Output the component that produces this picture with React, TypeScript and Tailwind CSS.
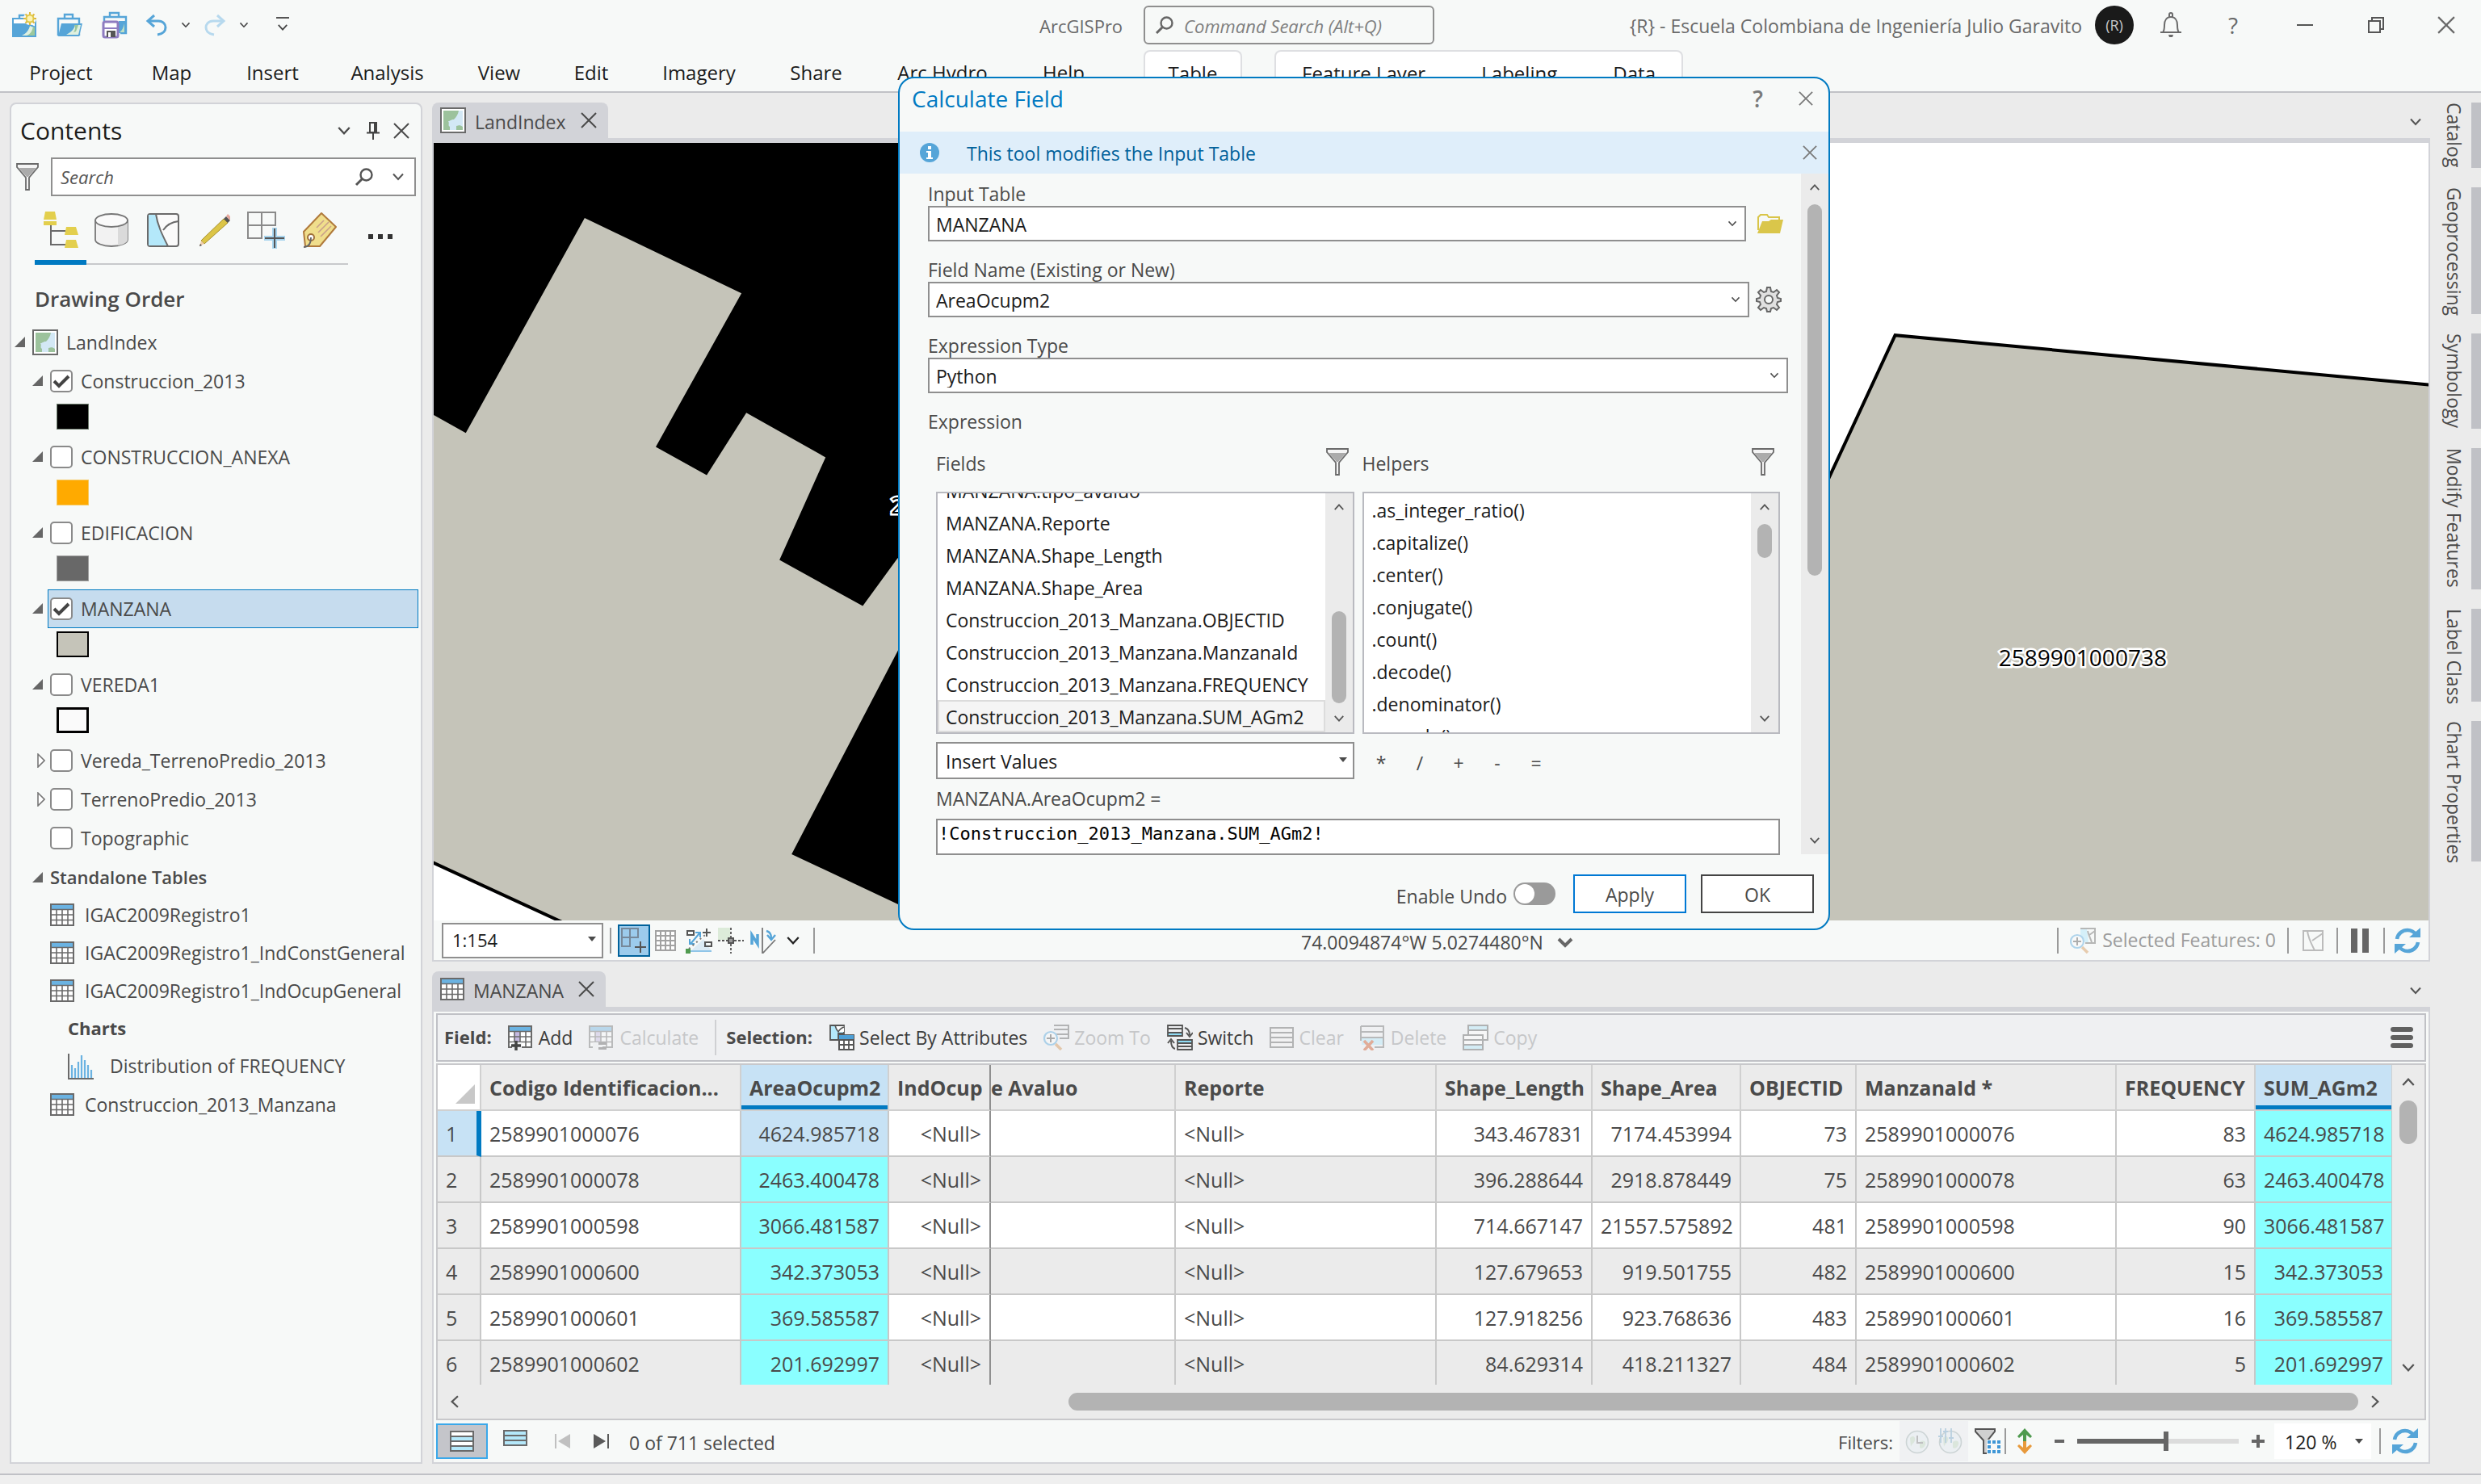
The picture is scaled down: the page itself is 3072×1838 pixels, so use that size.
import React from "react";

const FONT = "font-['Open_Sans','Noto_Sans',sans-serif]";

type P = { className?: string };

const Chevron = ({ className = "w-4 h-4", dir = "down" }: P & { dir?: "down" | "up" | "left" | "right" }) => {
  const d = {
    down: "M2 4.5 8 11l6-6.5",
    up: "M2 11.5 8 5l6 6.5",
    left: "M11.5 2 5 8l6.5 6",
    right: "M4.5 2 11 8l-6.5 6",
  }[dir];
  return (
    <svg viewBox="0 0 16 16" className={`shrink-0 ${className}`} fill="none" stroke="currentColor" strokeWidth="2">
      <path d={d} />
    </svg>
  );
};

const Caret = ({ className = "w-3 h-2" }: P) => (
  <svg viewBox="0 0 12 8" className={`shrink-0 ${className}`} fill="currentColor">
    <path d="M1 1h10L6 7z" />
  </svg>
);

const Cross = ({ className = "w-5 h-5" }: P) => (
  <svg viewBox="0 0 20 20" className={`shrink-0 ${className}`} fill="none" stroke="currentColor" strokeWidth="2">
    <path d="M1 1l18 18M19 1 1 19" />
  </svg>
);

const Magnifier = ({ className = "w-6 h-6" }: P) => (
  <svg viewBox="0 0 24 24" className={`shrink-0 ${className}`} fill="none" stroke="currentColor">
    <circle cx="14.5" cy="9.5" r="7" strokeWidth="2.4" />
    <path d="M9.5 14.5 2 22" strokeWidth="3" />
  </svg>
);

const NewProject = () => (
  <svg viewBox="0 0 32 32" className="size-8 shrink-0">
    <path d="M2 8h28v22H2z" fill="#fff" stroke="#56a5d8" strokeWidth="2" />
    <path d="M10 8V4h8" fill="none" stroke="#56a5d8" strokeWidth="2.4" />
    <path d="M2 14h20l8 4v12H2z" fill="#56a5d8" />
    <path d="M13 29C18 27 22 22 23 17l5 2v10z" fill="#dff0e0" />
    <path d="M19 29c5-2 7-6 8-11l2 1v10z" fill="#9cc89c" />
    <circle cx="23" cy="8" r="8" fill="#f7f9f8" />
    <path d="M23 0v16M15 8h16M17.5 2.500l11 11M28.500 2.500l-11 11" stroke="#e0b93a" strokeWidth="2" />
    <circle cx="23" cy="8" r="4.500" fill="#fdf3b5" stroke="#e0c84a" strokeWidth="2" />
  </svg>
);

const OpenProject = () => (
  <svg viewBox="0 0 32 32" className="size-8 shrink-0">
    <path d="M2 28V8h26v20zM10 8V3h10v5" fill="none" stroke="#56a5d8" strokeWidth="2.400" />
    <path d="M2 30l4-16h26l-4 16z" fill="#56a5d8" />
    <path d="M12 28c6-3 10-7 11-12h7l-3 12z" fill="#dff0e0" />
    <path d="M22 16c2 3 1 6-1 9l3-1 3-8z" fill="#9cc89c" />
  </svg>
);

const SaveProject = () => (
  <svg viewBox="0 0 32 34" className="h-[34px] w-8 shrink-0">
    <path d="M3 12V7h27v20h-7M10 7V2h11v5" fill="none" stroke="#56a5d8" strokeWidth="2.400" />
    <path d="M21 12h9v15h-9z" fill="#56a5d8" />
    <path d="M22 26c3-2 5-6 6-11v11z" fill="#bfe0c4" />
    <rect x="2" y="13" width="18" height="19" rx="2" fill="#fff" stroke="#8e7cc0" strokeWidth="3" />
    <path d="M3 21h16" stroke="#8e7cc0" strokeWidth="2" />
    <path d="M6 24h11v8H6z" fill="#555" />
    <path d="M8 26h3v6H8z" fill="#fff" />
  </svg>
);

const UndoArrow = ({ className = "" }: P) => (
  <svg viewBox="0 0 28 28" className={`size-7 shrink-0 ${className}`} fill="none" stroke="currentColor" strokeWidth="3">
    <path d="M11 2 3 9l8 7" />
    <path d="M3 9h13c6 0 9 4 9 8s-3 8-10 9" />
  </svg>
);

const Bell = () => (
  <svg viewBox="0 0 28 32" className="h-8 w-7 shrink-0" fill="none" stroke="#6a6a6a" strokeWidth="2">
    <path d="M1 25h26M4 25c2-2 2-5 2-9 0-6 3-10 8-10s8 4 8 10c0 4 0 7 2 9M12 6V3a2 2 0 0 1 4 0v3" />
    <path d="M11 28h6l-1 3h-4z" fill="#6a6a6a" stroke="none" />
  </svg>
);

const Restore = () => (
  <svg viewBox="0 0 20 20" className="size-5 shrink-0" fill="none" stroke="#555" strokeWidth="2">
    <path d="M1 5h14v14H1zM5 5V1h14v14h-4" />
  </svg>
);

const MapIcon = () => (
  <svg viewBox="0 0 32 32" className="size-8 shrink-0">
    <rect x="1" y="1" width="30" height="30" fill="#fff" stroke="#6a6a6a" strokeWidth="2" />
    <path d="M4 4h24v24H4z" fill="#d3e8f5" />
    <path d="M4 4h19c-1 5-3 8-6 11-4 0-4 2-7 2 2 3-1 5 2 7v4H4zM20 23c4-1 5-1 8 1v4h-8z" fill="#9cc29c" />
  </svg>
);

const TableIcon = ({ className = "" }: P) => (
  <svg viewBox="0 0 30 28" className={`h-7 w-[30px] shrink-0 ${className}`}>
    <rect x="1" y="1" width="28" height="26" fill="#fff" stroke="#6a6a6a" strokeWidth="2" />
    <path d="M2 2h26v5H2z" fill="#6bb3e2" />
    <path d="M1 7.500h28M1 14h28M1 20.500h28M8 8v19M15 8v19M22 8v19" stroke="#6a6a6a" strokeWidth="1.600" />
  </svg>
);

const Pin = () => (
  <svg viewBox="0 0 18 22" className="h-[22px] w-[18px] shrink-0" fill="none" stroke="#444" strokeWidth="2">
    <path d="M5 1h8v12H5zM1 13.500h16M9 14v8M11 1v12" />
  </svg>
);

const Funnel = () => (
  <svg viewBox="0 0 28 34" className="h-[34px] w-7 shrink-0">
    <path d="M1 1h26v4L16 18v15h-4V18L1 5z" fill="#f4f4f4" stroke="#6a6a6a" strokeWidth="1.800" />
    <path d="M3 6h22L15 17h-2z" fill="#ababab" />
  </svg>
);

const DrawOrderIcon = () => (
  <svg viewBox="0 0 44 46" className="h-[46px] w-11 shrink-0">
    <path d="M9 17v24h18M9 24h18" fill="none" stroke="#6a6a6a" strokeWidth="2" />
    <path d="M2 0h12l2 10H0zM0 12h16v5H0zM28 19h12l3 10H26zM28 35h12l3 10H26z" fill="#e3cf4d" />
  </svg>
);

const Cylinder = () => (
  <svg viewBox="0 0 42 42" className="size-[42px] shrink-0" stroke="#777" strokeWidth="1.800">
    <path d="M1 9v24c0 4 9 8 20 8s20-4 20-8V9z" fill="#f2f2f2" />
    <path d="M29 16c7-1 11-3 12-6v23c0 3-5 6-12 7z" fill="#dadada" stroke="none" />
    <ellipse cx="21" cy="9" rx="20" ry="8" fill="#fafafa" />
  </svg>
);

const PartIcon = () => (
  <svg viewBox="0 0 40 42" className="h-[42px] w-10 shrink-0" stroke="#6a6a6a" strokeWidth="2">
    <rect x="1" y="1" width="38" height="40" rx="3" fill="#fafafa" />
    <path d="M2 2h9c2 14 8 26 14 38H2z" fill="#b4e8fa" stroke="none" />
    <path d="M11 1c2 14 8 26 15 40M20 21C24 15 30 11 39 10" fill="none" />
  </svg>
);

const Pencil = () => (
  <svg viewBox="0 0 40 42" className="h-[42px] w-10 shrink-0">
    <path d="M31 7l5 5L7 38l-4-4z" fill="#dcc547" stroke="#a58f2a" strokeWidth="1" />
    <path d="M3 34l4 4-6 3z" fill="#f0cfae" />
    <path d="M1 41l1-3 2 2z" fill="#444" />
    <path d="M31 7l3-3 5 5-3 3z" fill="#555" />
    <path d="M34 4l2-3 3 3v5z" fill="#e6a79c" />
  </svg>
);

const GridPlus = () => (
  <svg viewBox="0 0 48 48" className="size-12 shrink-0" fill="none">
    <path d="M1 2h34v16H1zM1 18v16h17V2M18 18h17" stroke="#8a8a8a" strokeWidth="2" />
    <path d="M34 21v26M21 34h26" stroke="#a8d5ee" strokeWidth="6" />
    <path d="M34 22v24M22 34h24" stroke="#555" strokeWidth="2" />
  </svg>
);

const SnapToggleIcon = () => (
  <svg viewBox="0 0 32 32" className="size-8 shrink-0" fill="none">
    <path d="M1 1h20v11H1zM1 12v11h10V1" stroke="#76889a" strokeWidth="2" />
    <path d="M24 15v17M16 24h16" stroke="#9ccbec" strokeWidth="6" />
    <path d="M24 17v14M17 24h14" stroke="#555" strokeWidth="2" />
  </svg>
);

const Tag = () => (
  <svg viewBox="0 0 44 46" className="h-[46px] w-11 shrink-0">
    <path d="M2 25 24 2l18 17-20 24H4z" fill="#f0de8c" stroke="#b07a3c" strokeWidth="2" strokeLinejoin="round" />
    <path d="M18 20l9-9M20 26l13-13M23 31l13-13" stroke="#c9a08a" strokeWidth="1.600" />
    <circle cx="11" cy="32" r="4" fill="#fff" stroke="#a0703a" strokeWidth="2" />
    <path d="M11 32c0 8-3 12-9 12" fill="none" stroke="#666" strokeWidth="1.800" />
  </svg>
);

const ChartIcon = () => (
  <svg viewBox="0 0 32 32" className="size-8 shrink-0">
    <path d="M1 0v31h31" fill="none" stroke="#6a6a6a" strokeWidth="2" />
    <path d="M5 30V14M9 30V18M13 30V10M17 30V2M21 30V8M25 30V14M29 30V20" stroke="#6bb3e2" strokeWidth="2.200" />
  </svg>
);

const Tri = ({ open }: { open: boolean }) =>
  open ? (
    <svg viewBox="0 0 14 14" className="size-[14px] shrink-0">
      <path d="M13 0v13H0z" fill="#666" />
    </svg>
  ) : (
    <svg viewBox="0 0 10 18" className="ml-[6px] h-[18px] w-[10px] shrink-0">
      <path d="M1 1l8 8-8 8z" fill="#fff" stroke="#777" strokeWidth="1.600" />
    </svg>
  );

const Refresh = () => (
  <svg viewBox="0 0 32 32" className="size-8 shrink-0" fill="none" stroke="#56a5d8" strokeWidth="4.500">
    <path d="M3 14C4 7 10 3 16 3c5 0 8 2 11 6M29 18c-1 7-7 11-13 11-5 0-8-2-11-6" />
    <path d="M18 12h14V0zM14 20H0v12z" fill="#56a5d8" stroke="none" />
  </svg>
);

const Folder = () => (
  <svg viewBox="0 0 32 24" className="h-6 w-8 shrink-0">
    <path d="M1 20V4l3-3h8l2 3h13v6" fill="none" stroke="#d9c548" strokeWidth="2" />
    <path d="M0 24l6-15h8l3-2h15l-4 17z" fill="#dac64a" />
  </svg>
);

const Gear = () => (
  <svg viewBox="0 0 32 32" className="size-8 shrink-0" stroke="#666" strokeWidth="2">
    <path
      d="M14 1h4l1 5 3 1 4-3 3 3-3 4 1 3 4 1v3l-4 1-1 3 3 4-3 3-4-3-3 1-1 4h-4l-1-4-3-1-4 3-3-3 3-4-1-3-4-1v-3l4-1 1-3-3-4 3-3 4 3 3-1z"
      fill="#e0e0e0"
    />
    <circle cx="16" cy="16" r="5" fill="#f7f9f8" />
  </svg>
);

const RowsIcon = ({ fills, className = "" }: P & { fills: string[] }) => (
  <svg viewBox={`0 0 30 ${fills.length * 6 + 2}`} className={`w-[30px] shrink-0 ${className}`} stroke="#6a6a6a" strokeWidth="2">
    {fills.map((f, i) => (
      <rect key={i} x="1" y={1 + i * 6} width="28" height="6" fill={f} />
    ))}
  </svg>
);

const AddFieldIcon = ({ faded = false }: { faded?: boolean }) => (
  <svg viewBox="0 0 32 32" className={`size-8 shrink-0 ${faded ? "opacity-40" : ""}`}>
    <rect x="1" y="2" width="28" height="26" fill="#fff" stroke="#6a6a6a" strokeWidth="2" />
    <path d="M2 3h26v5H2z" fill="#6bb3e2" />
    <path d="M8 9h7v12H8z" fill="#c4b8e0" />
    <path d="M1 8.500h28M1 15h28M1 21.500h28M8 8v20M15 8v20M22 8v20" stroke="#6a6a6a" strokeWidth="1.600" />
    <path d="M5 22h12v10H5z" fill="#eff0f2" />
    {faded ? (
      <path d="M12 22h10v3H12zM12 28h10v3H12z" fill="#555" />
    ) : (
      <path d="M10 20v12M4 26h12" stroke="#444" strokeWidth="3.500" />
    )}
  </svg>
);

const SelectAttrIcon = () => (
  <svg viewBox="0 0 32 32" className="size-8 shrink-0">
    <path d="M2 1h17v10h-7v8H2z" fill="#b4e8fa" stroke="#555" strokeWidth="1.800" />
    <path d="M9 2h10v7h-7z" fill="#fff" />
    <path d="M8 1c1 4 2 6 4 8 2-4 4-5 7-6" fill="none" stroke="#555" strokeWidth="1.600" />
    <rect x="13" y="13" width="18" height="18" fill="#fff" stroke="#555" strokeWidth="2" />
    <path d="M13 13h18v5H13z" fill="#4d9fd6" />
    <path d="M13 19h18M13 25h18M19 19v12M25 19v12" stroke="#555" strokeWidth="1.800" />
  </svg>
);

const ZoomSelIcon = ({ map = false }: { map?: boolean }) => (
  <svg viewBox="0 0 32 32" className="size-8 shrink-0 opacity-50" fill="none">
    {map ? (
      <>
        <path d="M13 2h8l2 16h-4l-6-8z" fill="#b4e8fa" />
        <path d="M13 1h18v18H19M22 4c1 5 3 8 5 14M24 9l7-5" stroke="#777" strokeWidth="2" />
      </>
    ) : (
      <path d="M13 1h18v16H20M13 6h18M16 12h15" stroke="#777" strokeWidth="2" />
    )}
    <circle cx="9" cy="17" r="8" fill="#fafafa" stroke="#6bb3e2" strokeWidth="2.200" />
    <path d="M9 12v10M4 17h10" stroke="#666" strokeWidth="2" />
    <path d="M15 24l7 7" stroke="#d9a066" strokeWidth="3.500" />
  </svg>
);

const SwitchIcon = () => (
  <svg viewBox="0 0 32 32" className="size-8 shrink-0" fill="none" stroke="#555" strokeWidth="1.800">
    <path d="M1 1h18v13H1zM1 5h18M1 10h18M13 19h18v12H13zM13 23h18M13 27h18" />
    <path d="M2 11h16v2H2zM14 20h16v2H14z" fill="#8fdcf5" stroke="none" />
    <path d="M22 4c4 1 6 4 6 9M24 10l4 5 4-5M10 30c-4-1-5-5-5-10M1 23l4-5 4 5" strokeWidth="2" />
  </svg>
);

const DeleteIcon = () => (
  <svg viewBox="0 0 32 32" className="size-8 shrink-0 opacity-45" fill="none" stroke="#777" strokeWidth="2">
    <path d="M2 17h26v8H2z" fill="#b4e8fa" stroke="none" />
    <path d="M1 2h28v26H18M1 2v18M1 9h28M1 16h28" />
    <path d="M5 20l11 12M16 20 5 32" stroke="#d05a2c" strokeWidth="3.500" />
  </svg>
);

const CopyIcon = () => (
  <svg viewBox="0 0 32 32" className="size-8 shrink-0 opacity-45" stroke="#666" strokeWidth="2">
    <path d="M7 1h24v6H7z" fill="#b4e8fa" />
    <path d="M7 7h24v12H7z" fill="#fff" />
    <path d="M1 13h24v18H1z" fill="#fff" />
    <path d="M1 19h24v6H1z" fill="#fff" />
    <path d="M1 25h24v6H1z" fill="#b4e8fa" />
  </svg>
);

const GridIcon = () => (
  <svg viewBox="0 0 26 26" className="size-[26px] shrink-0" fill="#fff" stroke="#a2a2a2" strokeWidth="2">
    <path d="M1 1h24v24H1zM1 7h24M1 13h24M1 19h24M7 1v24M13 1v24M19 1v24" />
  </svg>
);

const SnapIcon = () => (
  <svg viewBox="0 0 34 32" className="h-8 w-[34px] shrink-0" fill="none">
    <path d="M6 29 22 14l10 15z" fill="#dcebf5" />
    <path d="M4 29h28" stroke="#8fc5e8" strokeWidth="2" />
    <path d="M2 4h8v5H2zM24 18h8v5h-8z" stroke="#555" strokeWidth="2" />
    <path d="M26 1v10M21 6h10" stroke="#555" strokeWidth="2" />
    <path d="M6 20 17 7M12 6h6v6M5 14v6h6" stroke="#56a5d8" strokeWidth="2" />
    <path d="M4 26 24 9" stroke="#777" strokeWidth="2" strokeDasharray="2 4" />
    <path d="M0 26h6v6H0z" fill="#4f9a4f" />
  </svg>
);

const CrosshairIcon = () => (
  <svg viewBox="0 0 32 32" className="size-8 shrink-0" fill="none">
    <path d="M0 0h15v15H0z" fill="#dcebd9" />
    <path d="M16 0v32M0 16h32" stroke="#555" strokeWidth="1.800" strokeDasharray="3 2" />
    <path d="M13 13h6v6h-6z" fill="#999" stroke="#555" strokeWidth="2" />
  </svg>
);

const NorthIcon = () => (
  <svg viewBox="0 0 32 32" className="size-8 shrink-0" fill="none">
    <path d="M2 21V9l7 11V8" stroke="#56a5d8" strokeWidth="3.500" />
    <path d="M15 0v32l16-17" stroke="#777" strokeWidth="1.800" />
    <path d="M20 4c4 1 6 4 6 9M21 9l5 6 5-6" stroke="#56a5d8" strokeWidth="2.400" />
  </svg>
);

const SelMapIcon = () => (
  <svg viewBox="0 0 26 26" className="size-[26px] shrink-0" fill="none" stroke="#bbb" strokeWidth="2">
    <path d="M1 1h24v24H1zM6 1c1 9 5 16 9 24M12 13l13-9" />
  </svg>
);

const Globe = ({ bars = false }: { bars?: boolean }) => (
  <svg viewBox="0 0 30 32" className="h-8 w-[30px] shrink-0 opacity-40" fill="none">
    <circle cx="15" cy="17" r="13.500" fill="#e4eef2" stroke="#9aa" strokeWidth="1.600" />
    <path d="M6 12c4-4 7-1 6 3s-4 4-5 8M18 17c5-3 8-1 7 3s-5 6-7 4z" fill="#bcd6bc" />
    {bars ? (
      <path d="M3 0v18M9 0v18M16 0v18M0 10h6M6 4h6M13 12h6" stroke="#6aa0c4" strokeWidth="1.800" />
    ) : (
      <path d="M15 9v9h7" stroke="#777" strokeWidth="2" />
    )}
  </svg>
);

const FilterGrid = () => (
  <svg viewBox="0 0 32 32" className="size-8 shrink-0">
    <path d="M1 1h24v3l-9 11v16h-5V15L1 4z" fill="#d0d0d0" stroke="#555" strokeWidth="2" />
    <path d="M15 14h17v18H15z" fill="#f7f9f8" />
    <path
      d="M16 15h4v4h-4zM22 15h4v4h-4zM28 15h4v4h-4zM16 21h4v4h-4zM28 21h4v4h-4zM16 27h4v4h-4zM22 27h4v4h-4zM28 27h4v4h-4z"
      fill="#3f97d6"
    />
  </svg>
);

const UpDown = () => (
  <svg viewBox="0 0 18 32" className="h-8 w-[18px] shrink-0">
    <path d="M9 0l9 10-2 2-5-4v8H7V8l-5 4-2-2z" fill="#4f9a4f" />
    <path d="M9 32l9-10-2-2-5 4v-8H7v8l-5-4-2 2z" fill="#e89a3c" />
  </svg>
);

/* ---------- Header ---------- */

const tabs: [string, string][] = [
  ["Project", "w-[151px]"],
  ["Map", "w-[123px]"],
  ["Insert", "w-[127px]"],
  ["Analysis", "w-[157px]"],
  ["View", "w-[120px]"],
  ["Edit", "w-[108px]"],
  ["Imagery", "w-[159px]"],
  ["Share", "w-[131px]"],
  ["Arc Hydro", "w-[182px]"],
  ["Help", "w-[118px]"],
];

const Header = () => (
  <header className="shrink-0 border-b-2 border-[#c0c1c6] bg-[#f7f9f8]">
    <div className="grid h-[62px] grid-cols-[1279px_1fr_auto] items-center">
      <div className="flex items-center pl-[14px] text-[#444]">
        <button aria-label="New project" className="mr-6"><NewProject /></button>
        <button aria-label="Open project" className="mr-6"><OpenProject /></button>
        <button aria-label="Save project" className="mr-[22px]"><SaveProject /></button>
        <button aria-label="Undo" className="mr-4"><UndoArrow className="text-[#56a5d8]" /></button>
        <button aria-label="Undo history" className="mr-4"><Chevron className="size-3" /></button>
        <button aria-label="Redo" className="mr-4 -scale-x-100"><UndoArrow className="text-[#b7d9ee]" /></button>
        <button aria-label="Redo history" className="mr-[34px]"><Chevron className="size-3" /></button>
        <button aria-label="Customize toolbar" className="flex flex-col items-center gap-1">
          <span className="h-[2px] w-4 bg-[#555]" />
          <Chevron className="size-[14px]" />
        </button>
      </div>
      <div className="flex items-center gap-[26px] pl-2">
        <span className="pt-[3px] text-[22px] text-[#6a6a6a]">ArcGISPro</span>
        <label className="flex h-[48px] w-[360px] items-center gap-3 rounded-md border-2 border-[#8f8f8f] pl-3 text-[#666]">
          <Magnifier className="size-6" />
          <input
            aria-label="Command Search"
            placeholder="Command Search (Alt+Q)"
            className="w-full bg-transparent pt-[3px] text-[22px] italic outline-none placeholder:text-[#7f7f7f]"
          />
        </label>
      </div>
      <div className="flex items-center text-[#6a6a6a]">
        <span className="mr-4 pt-[3px] text-[23px]">{"{R} - Escuela Colombiana de Ingeniería Julio Garavito"}</span>
        <span className="mr-8 flex size-[48px] items-center justify-center rounded-full bg-[#1a1a1a] text-[18px] text-[#c8c8c8]">(R)</span>
        <button aria-label="Notifications" className="mr-[54px]"><Bell /></button>
        <button aria-label="Help" className="mr-[70px] w-[18px] text-center text-[28px] leading-8">?</button>
        <button aria-label="Minimize" className="mr-[68px]"><span className="block h-[2px] w-5 bg-[#555]" /></button>
        <button aria-label="Restore" className="mr-[66px]"><Restore /></button>
        <button aria-label="Close" className="mr-8"><Cross className="size-[22px]" /></button>
      </div>
    </div>
    <nav className="flex h-[51px] text-[24px] text-[#1c1c1c]">
      {tabs.map(([t, w]) => (
        <button key={t} className={`${w} pt-1 text-center`}>{t}</button>
      ))}
      <button className="ml-10 w-[122px] rounded-t-lg border-2 border-b-0 border-[#dedfe2] bg-white pt-1">Table</button>
      <div className="ml-10 flex w-[506px] justify-between rounded-t-lg border-2 border-b-0 border-[#dedfe2] bg-white px-8 pt-1">
        <button>Feature Layer</button>
        <button>Labeling</button>
        <button>Data</button>
      </div>
    </nav>
  </header>
);

/* ---------- Contents pane ---------- */

const layers = [
  { name: "Construccion_2013", on: true, sw: "bg-black border border-[#6a7a6a]" },
  { name: "CONSTRUCCION_ANEXA", on: false, sw: "bg-[#ffaa00] border border-[#f5c860]" },
  { name: "EDIFICACION", on: false, sw: "bg-[#686868] border border-[#a0a0a0]" },
  { name: "MANZANA", on: true, sw: "bg-[#c5c4b9] border-2 border-black", sel: true },
  { name: "VEREDA1", on: false, sw: "bg-[#fafafa] border-3 border-black" },
];

const Check = ({ on }: { on: boolean }) => (
  <span className="relative flex size-7 shrink-0">
    <input
      type="checkbox"
      defaultChecked={on}
      className="peer size-7 appearance-none rounded-[5px] border-2 border-[#8a8a8a] bg-white"
    />
    <svg viewBox="0 0 28 28" className="pointer-events-none absolute inset-0 hidden peer-checked:block" fill="none" stroke="#444" strokeWidth="4">
      <path d="M5 14l6 6L23 8" />
    </svg>
  </span>
);

const LayerRow = ({ name, on, arrow, sel }: { name: string; on: boolean; arrow?: "open" | "closed"; sel?: boolean }) => (
  <li className="flex h-[48px] items-center pr-[3px] pl-[26px]">
    <span className="w-[19px]">{arrow && <Tri open={arrow === "open"} />}</span>
    <label
      className={`flex h-[48px] flex-1 items-center gap-[10px] border pl-[2px] ${
        sel ? "border-[#007ac2] bg-[#c6dcee]" : "border-transparent"
      }`}
    >
      <Check on={on} />
      <span>{name}</span>
    </label>
  </li>
);

const TableRow = ({ name }: { name: string }) => (
  <li className="flex h-[47px] items-center gap-[13px] pl-[48px]">
    <TableIcon />
    <span className="pt-[2px]">{name}</span>
  </li>
);

const Contents = () => (
  <aside className="flex w-[511px] shrink-0 flex-col rounded-t-lg border-2 border-[#d2d3d8] bg-[#f7f9f8] text-[#4a4a4a]">
    <div className="flex h-[66px] items-center pr-[14px] pl-[11px]">
      <h2 className="flex-1 text-[30px] text-[#1c1c1c]">Contents</h2>
      <button aria-label="Menu"><Chevron className="size-[18px]" /></button>
      <button aria-label="Pin" className="ml-[18px]"><Pin /></button>
      <button aria-label="Close" className="ml-[16px]"><Cross className="size-5" /></button>
    </div>
    <div className="flex h-[48px] items-center gap-[15px] pr-[6px] pl-[6px]">
      <button aria-label="Filter"><Funnel /></button>
      <label className="flex h-full flex-1 items-center border-2 border-[#8f8f8f] bg-white pr-3 pl-[10px] text-[#555]">
        <input aria-label="Search" placeholder="Search" className="min-w-0 flex-1 pt-[2px] text-[22px] italic outline-none placeholder:text-[#555]" />
        <Magnifier className="size-6" />
        <Chevron className="ml-[22px] size-4" />
      </label>
    </div>
    <div className="flex h-[79px] items-center pt-[4px] pl-[40px]">
      <button aria-label="List by drawing order" className="mr-[19px]"><DrawOrderIcon /></button>
      <button aria-label="List by data source" className="mr-[23px]"><Cylinder /></button>
      <button aria-label="List by selection" className="mr-[24px]"><PartIcon /></button>
      <button aria-label="List by editing" className="mr-[20px]"><Pencil /></button>
      <button aria-label="List by snapping" className="mr-[20px]"><GridPlus /></button>
      <button aria-label="List by labeling" className="mr-[38px]"><Tag /></button>
      <button aria-label="More" className="flex gap-[6px] pt-4">
        <span className="size-[6px] bg-[#333]" />
        <span className="size-[6px] bg-[#333]" />
        <span className="size-[6px] bg-[#333]" />
      </button>
    </div>
    <div className="mr-[90px] ml-[29px] flex h-[6px] items-end border-b-2 border-[#c8c9cc]">
      <span className="-mb-[2px] h-[6px] w-[64px] bg-[#007ac2]" />
    </div>
    <h3 className="flex h-[72px] items-center pt-[12px] pl-[29px] text-[26px] font-semibold">Drawing Order</h3>
    <ul className="text-[23px]">
      <li className="flex h-[48px] items-center pl-[4px]">
        <Tri open />
        <span className="ml-2 flex items-center gap-[10px]"><MapIcon />LandIndex</span>
      </li>
      {layers.map((l) => (
        <React.Fragment key={l.name}>
          <LayerRow name={l.name} on={l.on} arrow="open" sel={l.sel} />
          <li className="h-[46px] pt-1 pl-[56px]"><span className={`block h-8 w-10 ${l.sw}`} /></li>
        </React.Fragment>
      ))}
      <LayerRow name="Vereda_TerrenoPredio_2013" on={false} arrow="closed" />
      <LayerRow name="TerrenoPredio_2013" on={false} arrow="closed" />
      <LayerRow name="Topographic" on={false} />
      <li className="flex h-[47px] items-center gap-2 pt-[2px] pl-[26px] text-[22px] font-semibold"><Tri open />Standalone Tables</li>
      <TableRow name="IGAC2009Registro1" />
      <TableRow name="IGAC2009Registro1_IndConstGeneral" />
      <TableRow name="IGAC2009Registro1_IndOcupGeneral" />
      <li className="flex h-[47px] items-center pl-[70px] text-[22px] font-bold">Charts</li>
      <li className="flex h-[47px] items-center gap-[20px] pl-[70px]"><ChartIcon />Distribution of FREQUENCY</li>
      <TableRow name="Construccion_2013_Manzana" />
    </ul>
  </aside>
);

/* ---------- Map ---------- */

const Sep = ({ className = "" }: P) => <span className={`h-8 w-[2px] shrink-0 bg-[#9a9a9a] ${className}`} />;

const PaneTab = ({ icon, name }: { icon: React.ReactNode; name: string }) => (
  <div className="flex h-[44px] items-center justify-between pr-5">
    <div className="flex h-full items-center rounded-t-lg bg-[#d2d3d8] pr-[14px] pl-[10px] text-[23px] text-[#4a4a4a]">
      <button className="flex items-center gap-[11px]">{icon}<span className="pt-1">{name}</span></button>
      <button aria-label={`Close ${name}`} className="ml-[18px]"><Cross className="size-5" /></button>
    </div>
    <button aria-label="Window list" className="pt-1 text-[#555]"><Chevron className="-mr-[10px] size-4" /></button>
  </div>
);

const MapPane = () => (
  <section className="flex min-h-0 flex-1 flex-col">
    <PaneTab icon={<MapIcon />} name="LandIndex" />
    <div className="flex min-h-0 flex-1 flex-col border-2 border-t-[6px] border-[#d2d3d8] bg-[#f7f9f8]">
      <div className="min-h-0 flex-1 overflow-hidden bg-[#c5c4b9]">
        <svg viewBox="537 177 2470 962" preserveAspectRatio="xMidYMid slice" className="block h-full w-full">
          <path d="M537 177h1500v962H537z" fill="#c5c4b9" />
          <path d="M537 177h700v440l-125 74-43 59-103-57 57-127-98-55-49 77-63-35 106-190-194-93-147 266-41-23z" fill="#000" />
          <path d="M1240 552 1112 806 981 1057l259 122z" fill="#000" />
          <path d="M537 1067v72h155z" fill="#fff" />
          <path d="M530 1064 710 1147" stroke="#000" strokeWidth="4" />
          <path d="M2037 177h980v962H2037z" fill="#fff" />
          <path d="M2000 1160V1160L2346 415l680 63v682z" fill="#c5c4b9" stroke="#000" strokeWidth="4" />
          <g fontFamily="Open Sans" stroke="#fff" strokeWidth="5" paintOrder="stroke" fill="#000">
            <text x="2474" y="824" fontSize="28">2589901000738</text>
            <text x="1104" y="636" fontSize="28">2589901000076</text>
          </g>
        </svg>
      </div>
      <div className="flex h-[49px] shrink-0 items-center pr-[10px] pl-[10px] text-[23px] text-[#4a4a4a]">
        <div className="relative h-[44px] w-[200px] text-[22px]">
          <select aria-label="Map scale" className="size-full appearance-none border-2 border-[#8f8f8f] bg-white pl-[11px] text-[#1c1c1c]">
            <option>1:154</option>
          </select>
          <Caret className="pointer-events-none absolute top-4 right-2 h-2 w-3" />
        </div>
        <Sep className="mx-2" />
        <button aria-label="Snapping" className="flex size-[40px] items-center justify-center border-2 border-[#00619b] bg-[#9ccbec]"><SnapToggleIcon /></button>
        <button aria-label="Grid" className="ml-[6px]"><GridIcon /></button>
        <button aria-label="Inference" className="ml-3"><SnapIcon /></button>
        <button aria-label="Constraints" className="ml-[6px]"><CrosshairIcon /></button>
        <button aria-label="Ground to grid" className="ml-2"><NorthIcon /></button>
        <button aria-label="More tools" className="mr-[8px] ml-[12px] text-[#222]"><Chevron className="size-[18px]" /></button>
        <Sep className="ml-2" />
        <button className="ml-[602px] flex items-center gap-[17px] pt-[6px]">
          <span>74.0094874°W 5.0274480°N</span>
          <svg viewBox="0 0 20 16" className="h-4 w-5" fill="none" stroke="#666" strokeWidth="4"><path d="M2 3l8 8 8-8" /></svg>
        </button>
        <div className="ml-auto flex items-center">
          <Sep className="mr-[14px]" />
          <button disabled className="flex items-center gap-2 text-[#9c9c9c]"><ZoomSelIcon map />Selected Features: 0</button>
          <Sep className="mr-[17px] ml-[14px]" />
          <button aria-label="Clear selection"><SelMapIcon /></button>
          <Sep className="mx-[16px]" />
          <button aria-label="Pause drawing" className="flex gap-[6px]"><span className="h-[30px] w-2 bg-[#666]" /><span className="h-[30px] w-2 bg-[#666]" /></button>
          <Sep className="mr-[12px] ml-[18px]" />
          <button aria-label="Refresh"><Refresh /></button>
        </div>
      </div>
    </div>
  </section>
);

/* ---------- Attribute table ---------- */

const rows = [
  ["2589901000076", "4624.985718", "343.467831", "7174.453994", "73", "83"],
  ["2589901000078", "2463.400478", "396.288644", "2918.878449", "75", "63"],
  ["2589901000598", "3066.481587", "714.667147", "21557.575892", "481", "90"],
  ["2589901000600", "342.373053", "127.679653", "919.501755", "482", "15"],
  ["2589901000601", "369.585587", "127.918256", "923.768636", "483", "16"],
  ["2589901000602", "201.692997", "84.629314", "418.211327", "484", "5"],
];

const Th = ({ children, className = "" }: P & { children?: React.ReactNode }) => (
  <th className={`overflow-hidden border-r-2 border-b-2 border-[#d0d0d0] px-[10px] text-left font-bold whitespace-nowrap ${className}`}>{children}</th>
);

const Td = ({ children, className = "" }: P & { children?: React.ReactNode }) => (
  <td className={`overflow-hidden border-r-2 border-b-2 border-[#c8c8c8] px-[10px] whitespace-nowrap ${className}`}>{children}</td>
);

const ToolBtn = ({ icon, label, off }: { icon: React.ReactNode; label: string; off?: boolean }) => (
  <button disabled={off} className={`flex items-center gap-[6px] ${off ? "text-[#c6c7c9]" : "text-[#3c3c3c]"}`}>
    {icon}
    <span>{label}</span>
  </button>
);

const TablePane = () => (
  <section className="mt-3 shrink-0">
    <PaneTab icon={<TableIcon />} name="MANZANA" />
    <div className="border-2 border-t-[6px] border-[#d2d3d8] bg-[#f7f9f8] px-[3px] pt-[2px] text-[#4a4a4a]">
      <div className="flex h-[60px] items-center gap-5 border-2 border-[#c0c1c6] bg-[#eff0f2] pr-[14px] pl-[8px] text-[23px]">
        <span className="text-[22px] font-bold">Field:</span>
        <ToolBtn icon={<AddFieldIcon />} label="Add" />
        <ToolBtn icon={<AddFieldIcon faded />} label="Calculate" off />
        <span className="h-[44px] w-[2px] bg-[#cfd0d3]" />
        <span className="-ml-2 text-[22px] font-bold">Selection:</span>
        <ToolBtn icon={<SelectAttrIcon />} label="Select By Attributes" />
        <ToolBtn icon={<ZoomSelIcon />} label="Zoom To" off />
        <ToolBtn icon={<SwitchIcon />} label="Switch" />
        <ToolBtn icon={<RowsIcon fills={["#f4f4f4", "#f4f4f4", "#f4f4f4", "#f4f4f4"]} className="opacity-45" />} label="Clear" off />
        <ToolBtn icon={<DeleteIcon />} label="Delete" off />
        <ToolBtn icon={<CopyIcon />} label="Copy" off />
        <button aria-label="Table menu" className="ml-auto flex flex-col gap-1">
          <span className="h-[6px] w-7 rounded-full bg-[#606060]" />
          <span className="h-[6px] w-7 rounded-full bg-[#606060]" />
          <span className="h-[6px] w-7 rounded-full bg-[#606060]" />
        </button>
      </div>
      <div className="mt-[2px] border-2 border-[#c8c8cb] bg-[#ebebeb]">
        <div className="flex">
          <div className="h-[396px] flex-1 overflow-hidden">
            <table className="w-full table-fixed border-separate border-spacing-0 text-[25px]">
              <colgroup>
                <col className="w-[54px]" />
                <col className="w-[322px]" />
                <col className="w-[183px]" />
                <col className="w-[126px]" />
                <col className="w-[229px]" />
                <col className="w-[323px]" />
                <col className="w-[193px]" />
                <col className="w-[184px]" />
                <col className="w-[143px]" />
                <col className="w-[322px]" />
                <col className="w-[172px]" />
                <col className="w-[170px]" />
              </colgroup>
              <thead>
                <tr className="h-[57px] leading-8">
                  <Th className="bg-white">
                    <svg viewBox="0 0 24 24" className="mt-4 ml-3 size-6"><path d="M24 0v24H0z" fill="#c8c8c8" /></svg>
                  </Th>
                  <Th>Codigo Identificacion...</Th>
                  <Th className="bg-[#c7e2f5] shadow-[inset_0_-5px_0_#007ac2]">AreaOcupm2</Th>
                  <Th className="border-r-[#8f8f8f]">IndOcup</Th>
                  <Th className="pl-0"><span>e Avaluo</span></Th>
                  <Th>Reporte</Th>
                  <Th>Shape_Length</Th>
                  <Th>Shape_Area</Th>
                  <Th>OBJECTID</Th>
                  <Th>ManzanaId *</Th>
                  <Th>FREQUENCY</Th>
                  <Th className="bg-[#c7e2f5] shadow-[inset_0_-5px_0_#007ac2]">SUM_AGm2</Th>
                </tr>
              </thead>
              <tbody>
                {rows.map((r, i) => {
                  const bg = i % 2 ? "bg-[#ebebeb]" : "bg-white";
                  return (
                    <tr key={r[0]} className={`h-[57px] leading-8 ${bg}`}>
                      <Td className={i ? "bg-[#ebebeb]" : "border-r-[6px] border-r-[#007ac2] bg-[#c7e2f5]"}>{i + 1}</Td>
                      <Td>{r[0]}</Td>
                      <Td className={`text-right ${i ? "bg-[#8affff]" : "bg-[#c7e2f5]"}`}>{r[1]}</Td>
                      <Td className="border-r-[#8f8f8f] text-right">&lt;Null&gt;</Td>
                      <Td />
                      <Td>&lt;Null&gt;</Td>
                      <Td className="text-right">{r[2]}</Td>
                      <Td className="text-right">{r[3]}</Td>
                      <Td className="text-right">{r[4]}</Td>
                      <Td>{r[0]}</Td>
                      <Td className="text-right">{r[5]}</Td>
                      <Td className="bg-[#8affff] text-right">{r[1]}</Td>
                    </tr>
                  );
                })}
              </tbody>
            </table>
          </div>
          <div className="flex w-[40px] flex-col items-center pt-[12px] pb-[12px] text-[#555]">
            <Chevron dir="up" className="size-[18px]" />
            <span className="mt-[14px] h-[54px] w-[22px] rounded-full bg-[#b3b3b3]" />
            <Chevron className="mt-auto size-[18px]" />
          </div>
        </div>
        <div className="flex h-[42px] items-center pr-[52px] pl-3 text-[#555]">
          <Chevron dir="left" className="size-[18px]" />
          <div className="flex flex-1 justify-end pr-3"><span className="h-[22px] w-[68%] rounded-full bg-[#b3b3b3]" /></div>
          <Chevron dir="right" className="size-[18px]" />
        </div>
      </div>
      <div className="flex h-[52px] items-center pr-[10px] text-[22px]">
        <button aria-label="Show all records" className="flex h-[44px] w-[64px] items-center justify-center border-2 border-[#3aa8ea] bg-[#c4c5ca]">
          <RowsIcon fills={["#fff", "#b4e8fa", "#fff", "#b4e8fa"]} />
        </button>
        <button aria-label="Show selected records" className="ml-[19px] pb-2"><RowsIcon fills={["#b4e8fa", "#b4e8fa", "#b4e8fa"]} /></button>
        <button aria-label="First record" disabled className="ml-[34px]">
          <svg viewBox="0 0 20 18" className="h-[18px] w-5"><path d="M0 0h2v18H0zM19 0v18L4 9z" fill="#c0c0c0" /></svg>
        </button>
        <button aria-label="Last record" className="ml-[27px]">
          <svg viewBox="0 0 20 18" className="h-[18px] w-5"><path d="M18 0h2v18h-2zM1 0v18L16 9z" fill="#5a5a5a" /></svg>
        </button>
        <span className="ml-[25px] pt-1 text-[23px]">0 of 711 selected</span>
        <span className="mr-[8px] ml-auto pt-1">Filters:</span>
        <span className="mr-2 flex h-[50px] items-center gap-[11px] bg-[#f0f1f3] px-[7px]"><Globe /><Globe bars /></span>
        <button aria-label="Filter by extent"><FilterGrid /></button>
        <Sep className="mr-[14px] ml-[5px]" />
        <button aria-label="Sort"><UpDown /></button>
        <button aria-label="Zoom out" className="ml-[28px]"><span className="block h-[4px] w-3 bg-[#666]" /></button>
        <input
          aria-label="Table zoom"
          type="range"
          defaultValue={55}
          className="mx-[16px] h-[6px] w-[200px] appearance-none bg-[linear-gradient(to_right,#666_55%,#dcdcdc_55%)] [&::-webkit-slider-thumb]:h-6 [&::-webkit-slider-thumb]:w-[6px] [&::-webkit-slider-thumb]:appearance-none [&::-webkit-slider-thumb]:bg-[#666]"
        />
        <button aria-label="Zoom in">
          <svg viewBox="0 0 16 16" className="size-4" stroke="#666" strokeWidth="4"><path d="M8 0v16M0 8h16" /></svg>
        </button>
        <div className="relative ml-[12px] h-[44px] w-[120px]">
          <select aria-label="Zoom level" className="size-full appearance-none bg-white pt-[2px] pl-[13px] text-[23px] text-[#1c1c1c]">
            <option>120 %</option>
          </select>
          <Caret className="pointer-events-none absolute top-[18px] right-[9px] h-2 w-3" />
        </div>
        <Sep className="mr-[14px] ml-[10px]" />
        <button aria-label="Reload table"><Refresh /></button>
      </div>
    </div>
  </section>
);

/* ---------- Calculate Field dialog ---------- */

const fields = [
  "MANZANA.tipo_avaluo",
  "MANZANA.Reporte",
  "MANZANA.Shape_Length",
  "MANZANA.Shape_Area",
  "Construccion_2013_Manzana.OBJECTID",
  "Construccion_2013_Manzana.ManzanaId",
  "Construccion_2013_Manzana.FREQUENCY",
  "Construccion_2013_Manzana.SUM_AGm2",
];
const helpers = [
  ".as_integer_ratio()",
  ".capitalize()",
  ".center()",
  ".conjugate()",
  ".count()",
  ".decode()",
  ".denominator()",
  ".encode()",
];

const Select = ({ id, label, value, width, after }: { id: string; label: string; value: string; width: string; after?: React.ReactNode }) => (
  <div className="h-[94px]">
    <label htmlFor={id} className="flex h-[40px] items-end pb-[2px] leading-[26px]">{label}</label>
    <div className="flex items-center">
      <div className={`relative h-[44px] ${width}`}>
        <select id={id} className="size-full appearance-none border-2 border-[#8f8f8f] bg-white pt-[2px] pl-2 text-[#1c1c1c]">
          <option>{value}</option>
        </select>
        <Chevron className="pointer-events-none absolute top-4 right-[11px] size-3" />
      </div>
      {after}
    </div>
  </div>
);

const ListScroll = ({ thumb }: { thumb: React.ReactNode }) => (
  <div className="flex w-[34px] shrink-0 flex-col items-center bg-[#ebebeb] py-[10px] text-[#555]">
    <Chevron dir="up" className="size-[14px]" />
    {thumb}
    <Chevron className="mt-auto size-[14px]" />
  </div>
);

const Dialog = () => (
  <div
    role="dialog"
    aria-label="Calculate Field"
    className="absolute top-[95px] left-[1112px] flex h-[1057px] w-[1154px] flex-col overflow-hidden rounded-[20px] border-2 border-[#007ac2] bg-[#f7f9f8] text-[23px] text-[#4a4a4a]"
  >
    <div className="flex h-[66px] shrink-0 items-start pt-[9px] pr-[19px] pl-[15px] text-[#7a7a7a]">
      <h2 className="flex-1 text-[28px] leading-8 text-[#007ac2]">Calculate Field</h2>
      <button aria-label="Help" className="mr-[44px] text-[28px] leading-8 font-semibold">?</button>
      <button aria-label="Close" className="pt-[7px]"><Cross className="size-[18px]" /></button>
    </div>
    <div className="flex h-[52px] shrink-0 items-center bg-[#dfeefa] pr-[14px] pl-[25px] text-[#00619b]">
      <svg viewBox="0 0 24 24" className="mr-[34px] size-6">
        <circle cx="12" cy="12" r="12" fill="#56a5d8" />
        <path d="M10 4h4v4h-4zM8 10h6v8h2v2H8v-2h2v-6H8z" fill="#fff" />
      </svg>
      <p className="flex-1 pt-[3px]">This tool modifies the Input Table</p>
      <button aria-label="Dismiss message" className="text-[#7a7a7a]"><Cross className="size-[18px]" /></button>
    </div>
    <div className="flex h-[843px] shrink-0">
      <div className="flex-1 pl-[35px]">
        <Select id="input-table" label="Input Table" value="MANZANA" width="w-[1013px]" after={<button aria-label="Browse" className="ml-[14px]"><Folder /></button>} />
        <Select id="field-name" label="Field Name (Existing or New)" value="AreaOcupm2" width="w-[1017px]" after={<button aria-label="Settings" className="ml-2"><Gear /></button>} />
        <Select id="expr-type" label="Expression Type" value="Python" width="w-[1065px]" />
        <p className="pt-[12px] leading-[26px]">Expression</p>
        <div className="grid w-[1055px] grid-cols-2 gap-[10px] pt-[20px] pl-[10px]">
          <div>
            <div className="flex h-[54px] items-start justify-between pr-[7px]"><span className="leading-[38px]">Fields</span><button aria-label="Filter fields"><Funnel /></button></div>
            <div className="flex h-[300px] border-2 border-[#b9bac0] bg-white text-[#1c1c1c]">
              <ul role="listbox" aria-label="Fields" className="flex min-w-0 flex-1 flex-col justify-end overflow-hidden">
                {fields.map((f, i) => (
                  <li
                    key={f}
                    role="option"
                    aria-selected={i === 7}
                    className={`flex h-[40px] shrink-0 items-center border-2 pt-[3px] pl-2 ${i === 7 ? "border-[#dcdcdc] bg-[#f5f5f5]" : "border-transparent"}`}
                  >
                    {f}
                  </li>
                ))}
              </ul>
              <ListScroll thumb={<span className="mt-[122px] h-[114px] w-[18px] rounded-full bg-[#b3b3b3]" />} />
            </div>
          </div>
          <div>
            <div className="flex h-[54px] items-start justify-between pr-[7px]"><span className="leading-[38px]">Helpers</span><button aria-label="Filter helpers"><Funnel /></button></div>
            <div className="flex h-[300px] border-2 border-[#b9bac0] bg-white text-[#1c1c1c]">
              <ul role="listbox" aria-label="Helpers" className="min-w-0 flex-1 overflow-hidden pt-px">
                {helpers.map((f) => (
                  <li key={f} role="option" aria-selected={false} className="flex h-[40px] items-center pl-[10px]">{f}</li>
                ))}
              </ul>
              <ListScroll thumb={<span className="mt-[14px] h-[42px] w-[18px] rounded-full bg-[#b3b3b3]" />} />
            </div>
          </div>
        </div>
        <div className="flex items-center pt-[10px] pl-[10px]">
          <div className="relative h-[46px] w-[518px]">
            <select aria-label="Insert Values" className="size-full appearance-none border-2 border-[#8f8f8f] bg-white pt-[2px] pl-[10px] text-[#1c1c1c]">
              <option>Insert Values</option>
            </select>
            <Caret className="pointer-events-none absolute top-[18px] right-2 h-2 w-3" />
          </div>
          <div className="flex pt-[7px] pl-[9px]">
            {["*", "/", "+", "-", "="].map((o) => (
              <button key={o} className="w-[48px]">{o}</button>
            ))}
          </div>
        </div>
        <label htmlFor="expr" className="flex h-[49px] items-center pl-[10px]">MANZANA.AreaOcupm2 =</label>
        <div className="pl-[10px]">
          <textarea
            id="expr"
            rows={1}
            defaultValue="!Construccion_2013_Manzana.SUM_AGm2!"
            className="block h-[45px] w-[1045px] resize-none overflow-hidden border-2 border-[#8f8f8f] bg-white px-[1px] pt-[4px] font-['DejaVu_Sans_Mono',monospace] text-[22px] leading-[26px] text-black"
          />
        </div>
      </div>
      <div className="flex w-[34px] shrink-0 flex-col items-center bg-[#ebebeb] py-[10px] text-[#555]">
        <Chevron dir="up" className="size-[14px]" />
        <span className="mt-[14px] h-[460px] w-[18px] rounded-full bg-[#b3b3b3]" />
        <Chevron className="mt-auto size-[14px]" />
      </div>
    </div>
    <div className="flex h-[92px] items-center justify-end gap-[18px] pt-[6px] pr-[18px]">
      <label className="mr-1 flex items-center gap-2">
        <span className="pt-[6px]">Enable Undo</span>
        <span className="relative flex h-7 w-[52px]">
          <input type="checkbox" role="switch" className="h-7 w-[52px] appearance-none rounded-full bg-[#9a9a9a]" />
          <span className="pointer-events-none absolute top-[2px] left-[2px] size-6 rounded-full bg-white" />
        </span>
      </label>
      <button className="h-[48px] w-[140px] border-2 border-[#0078d4] bg-white pt-[3px]">Apply</button>
      <button className="h-[48px] w-[140px] border-2 border-[#444] bg-white pt-[3px]">OK</button>
    </div>
  </div>
);

const dock: [string, string][] = [
  ["Catalog", "h-[81px]"],
  ["Geoprocessing", "h-[157px]"],
  ["Symbology", "h-[118px]"],
  ["Modify Features", "h-[175px]"],
  ["Label Class", "h-[115px]"],
  ["Chart Properties", "h-[174px]"],
];

export default function App() {
  return (
    <div className={`${FONT} relative flex h-screen flex-col overflow-hidden bg-[#ebebeb] leading-tight`}>
      <Header />
      <div className="flex min-h-0 flex-1 pt-3 pb-3 pl-3">
        <Contents />
        <main className="ml-[12px] flex min-w-0 flex-1 flex-col">
          <MapPane />
          <TablePane />
        </main>
        <nav className="flex w-[63px] shrink-0 flex-col gap-6 pl-[12px]">
          {dock.map(([t, h]) => (
            <button key={t} className={`${h} w-full border-r-[12px] border-[#c0c1c6] pr-1 text-left text-[23px] whitespace-nowrap text-[#4a4a4a] [writing-mode:vertical-rl]`}>
              {t}
            </button>
          ))}
        </nav>
      </div>
      <footer className="h-[13px] shrink-0 border-t-2 border-[#c0c1c6] bg-[#efefef]" />
      <Dialog />
    </div>
  );
}
